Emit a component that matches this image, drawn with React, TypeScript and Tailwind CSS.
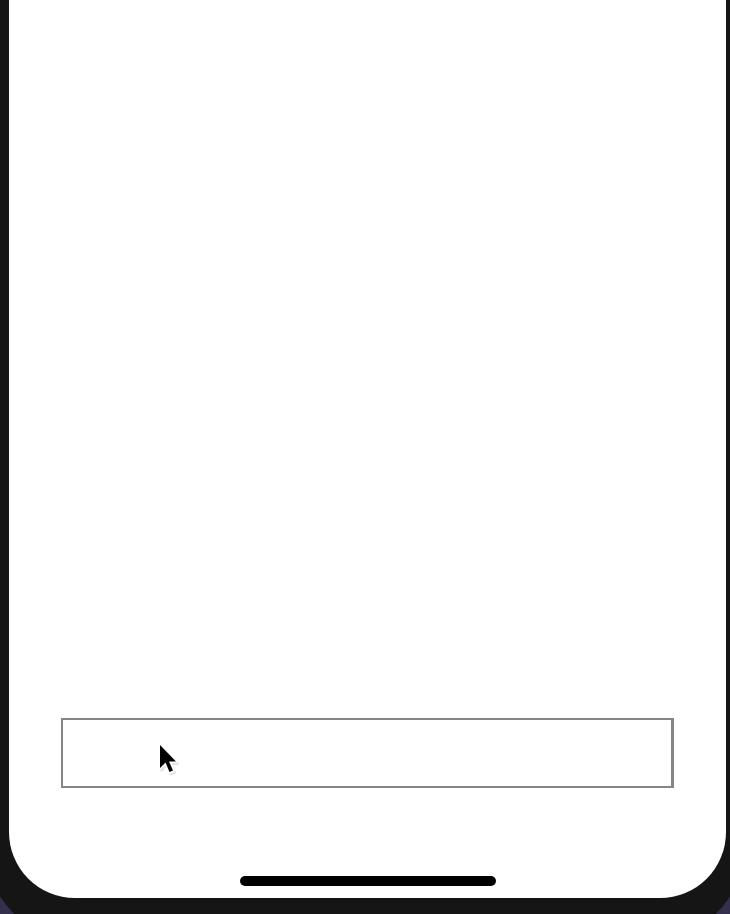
export default function App() {
  return (
    <div className="relative w-[730px] h-[914px] overflow-hidden bg-[#332f4d]">
      <div className="w-[770px] h-[950px] -ml-[20px] rounded-b-[120px] bg-[#151515] pl-[29px]">
        <div className="w-[717px] h-[898px] bg-white rounded-b-[66px] flex flex-col items-center pb-[12px]">
          <div className="relative mt-auto w-[613px] h-[70px] border-2 border-r-[3px] border-[#858585] bg-white">
            {/* mouse pointer over the field */}
            <svg
              className="absolute left-[92px] top-[21px]"
              width="28"
              height="38"
              viewBox="0 0 28 38"
            >
              <path
                d="M5 4 L5 27 L10.5 21.5 L14.5 31 L18 29.5 L14 20.5 L21 20.5 Z"
                fill="#000"
                opacity="0.1"
                stroke="#000"
                strokeWidth="3"
                strokeLinejoin="round"
                transform="translate(1.5 2)"
              />
              <path
                d="M5 4 L5 27 L10.5 21.5 L14.5 31 L18 29.5 L14 20.5 L21 20.5 Z"
                fill="#000"
                stroke="#fff"
                strokeWidth="3"
                strokeLinejoin="round"
                paintOrder="stroke"
              />
            </svg>
          </div>
          <div className="mt-[88px] w-[256px] h-[10px] rounded-full bg-black" />
        </div>
      </div>
    </div>
  );
}
